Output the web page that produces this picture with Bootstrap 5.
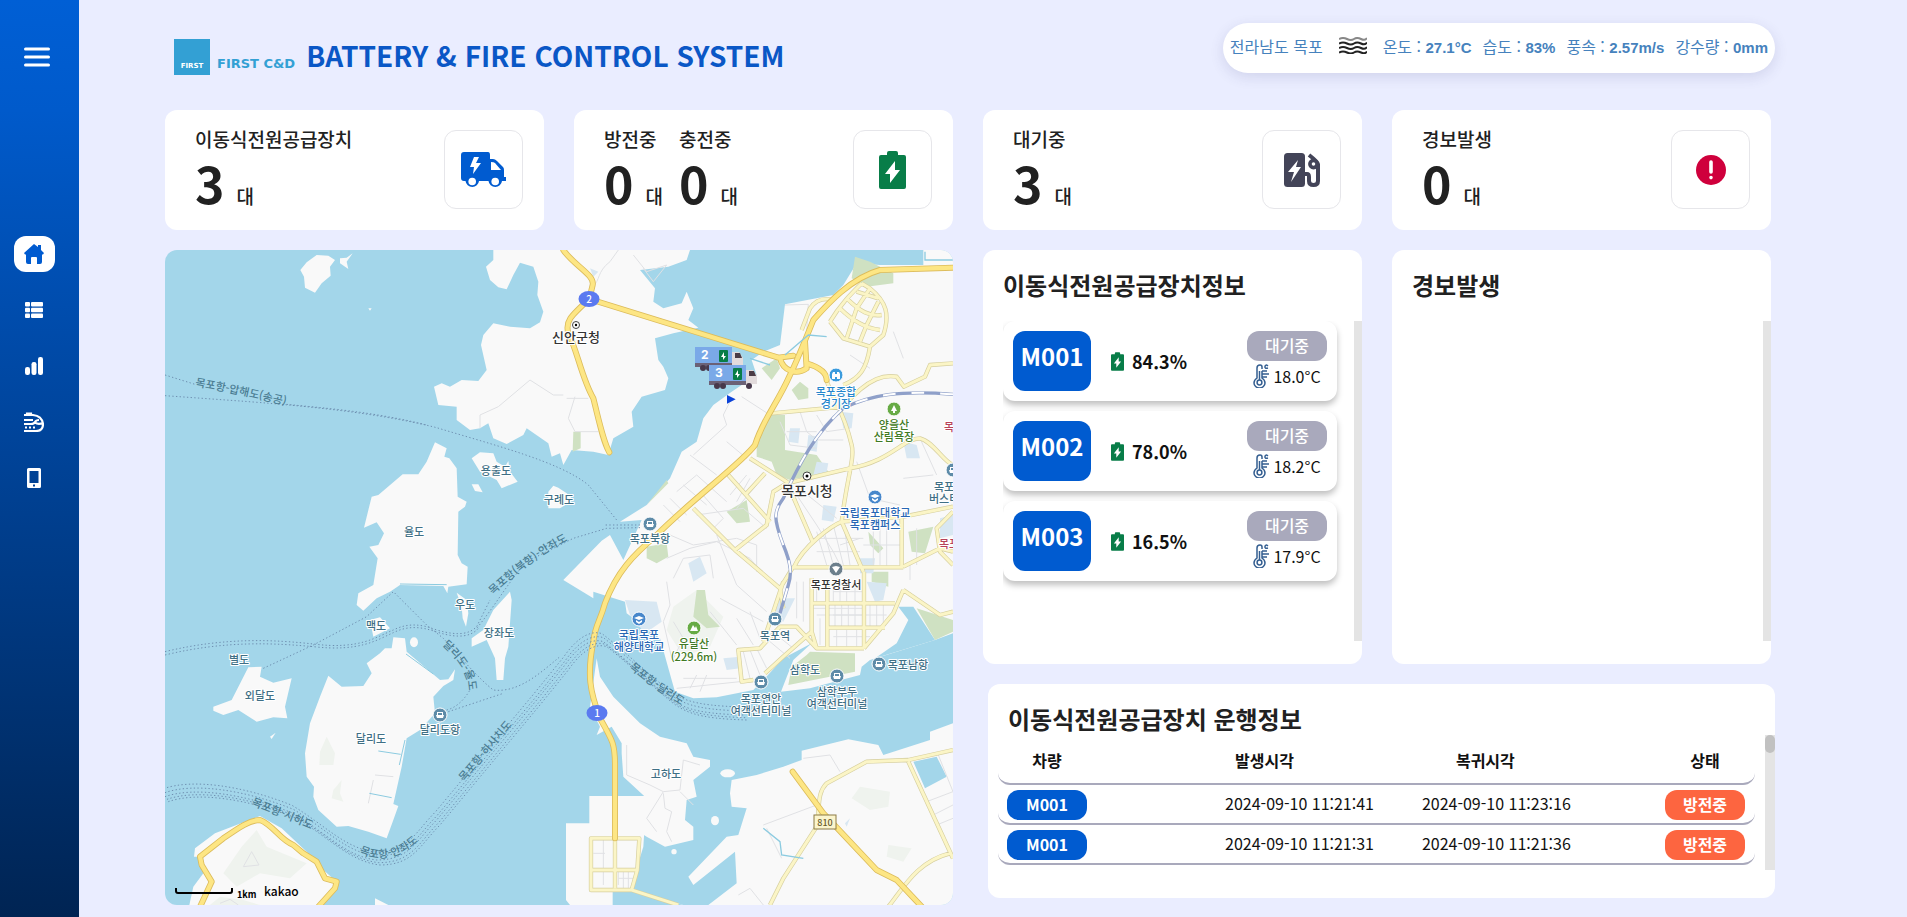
<!DOCTYPE html>
<html lang="ko">
<head>
<meta charset="utf-8">
<meta name="viewport" content="width=device-width, initial-scale=1">
<title>BATTERY &amp; FIRE CONTROL SYSTEM</title>
<link href="https://cdn.jsdelivr.net/npm/bootstrap@5.3.0/dist/css/bootstrap.min.css" rel="stylesheet">
<style>
:root{--brand:#005bd0;--ink:#212121}
body{background:#eaedff;color:var(--ink);font-family:"Noto Sans CJK KR","Noto Sans",sans-serif;font-size:16px;min-height:100vh}
.side{width:79px;flex:none;background:linear-gradient(180deg,#005fd5 0%,#005acb 12%,#002453 100%);padding-top:40px}
.side .menu-btn{width:34px;height:34px;margin-left:20px;color:#fff}
.side .menu-list{margin-top:162px;gap:20px;padding-left:14px}
.side a{width:41px;height:36px;border-radius:12px;color:#fff;padding-right:1px}
.side a.active{background:#fff;color:var(--brand)}
.main-area{padding:23px 121px 12px 71px;min-width:0}
.page-grid{padding:0 15px}
.gutter{--bs-gutter-x:30px;--bs-gutter-y:20px}
.top-bar{height:87px;padding-left:24px;margin-right:11px}
.logo-box{width:36px;height:36px;background:#33a0d4;color:#fff;font:700 7px "DejaVu Sans",sans-serif;padding-bottom:5px;margin-top:16px}
.logo-name{font:700 13px "DejaVu Sans",sans-serif;color:#33a0d4;margin:33px 11px 0 7px}
.site-title{font-size:28px;line-height:36px;font-weight:700;color:#0a57c6;margin-top:14px}
.weather{height:50px;border-radius:25px;background:#fff;box-shadow:0 4px 14px rgba(60,60,120,.14);color:#4682bd;line-height:46px;padding:0 7px}
.weather b{font:700 15px/46px "Liberation Sans",sans-serif}
.weather .sky-icon{margin:14px 16px 0}
.weather .readings{gap:11px}
.box{background:#fff;border-radius:12px}
.stat{height:120px;padding:15px 21px 0 30px}
.stat h2{font-size:19px;line-height:28px;font-weight:500;margin:0}
.stat .num{font-size:50px;line-height:56px;font-weight:700;margin-top:1px}
.stat .num small{font-size:19px;font-weight:500;margin-left:12px}
.icon-frame{width:79px;height:79px;border:1px solid #e6e6ea;border-radius:12px;margin-top:5px}
.map-box{height:calc(100vh - 262px);min-height:655px;border-radius:12px;overflow:hidden;background:#a3d6ea}
.map-box svg{width:100%;height:100%}
.panel{height:414px;padding:19px 0 23px 20px}
.panel-title{font-size:24px;line-height:31px;font-weight:700;margin:0}
.scroller{height:320px;overflow:hidden;margin-top:21px}
.track{width:8px;background:#e4e4e4;flex:none}
.unit-list{gap:10px}
.unit{height:80px;border-radius:12px;background:#fff;box-shadow:0 4px 6px rgba(0,0,0,.25);padding:10px;margin-right:17px}
.unit-id{width:78px;height:60px;border-radius:12px;background:var(--brand);color:#fff;font-size:24px;line-height:50px;font-weight:700}
.charge{font-size:18px;line-height:26px;font-weight:700;color:#111;margin-left:20px}
.pill{display:inline-block;width:80px;height:30px;line-height:28px;border-radius:12px;color:#fff;text-align:center;font-weight:500}
.pill-wait{background:#a9a9bc}.pill-id{background:var(--brand)}.pill-out{background:#fd6540}
.temp{height:30px;color:#111}
.trips{margin:0 -4px 0 5px;height:214px;padding:19px 0 0 10px}
.trips .panel-title{padding-left:10px}
.trips .scroller{height:135px;margin-top:1px}
.trips .track{width:10px;margin-left:10px}
.thumb{height:18px;border-radius:6px;background:#c1c1c1}
.trip-table{width:100%;border-collapse:separate;border-spacing:0;table-layout:fixed;color:#111}
.trip-table th{height:50px;font-weight:700;line-height:24px;padding:2px 0 0;border-bottom:2px solid #a9a9bc}
.trip-table td{height:40px;padding:5px 0 0;line-height:26px;vertical-align:top;border-bottom:2px solid #a9a9bc}
.trip-table tr>:first-child{padding-left:9px;border-bottom-left-radius:12px}
.trip-table tr>:last-child{padding-right:10px;border-bottom-right-radius:12px}
.trip-table .pill{font-weight:700;vertical-align:top;line-height:29px}
.trip-table th span{width:80px;display:inline-block;text-align:center}
.trip-table th.out-head{padding-left:10px}
.trip-table th.back-head{padding-left:34px}
.c1{width:30%}.c2{width:26%}.c3{width:24%}
.land{fill:#f9f9f9}
.maj-c{fill:none;stroke:#dcbc5c;stroke-width:18;stroke-linejoin:round;stroke-linecap:round}
.maj{fill:none;stroke:#fde684;stroke-width:13;stroke-linejoin:round;stroke-linecap:round}
.sec-c{fill:none;stroke:#d6cf9f;stroke-width:13;stroke-linejoin:round}
.sec-f{fill:none;stroke:#fbf5c6;stroke-width:9;stroke-linejoin:round}
.minor{fill:none;stroke:#e0e1e4;stroke-width:3}
.green{fill:#cfe1c2}.dim{fill:#eff3ee}.patch{fill:#d8e7f2}
.ferry{fill:none;stroke:#6d8fb0;stroke-width:3;stroke-dasharray:4 7}
.lab{font-size:11px;font-weight:500;text-anchor:middle;paint-order:stroke;stroke:#fff;stroke-width:2px;stroke-linejoin:round;fill:#3f6f85}
.lab .dark{fill:#333}.lab .grn{fill:#3f7a24}.lab .blu{fill:#2766b4}.lab .sky{fill:#2586cc}.lab .red{fill:#b8435a}
.lab .route{stroke:none;fill:#4a7c92}
</style>
<script src="https://cdn.jsdelivr.net/npm/bootstrap@5.3.0/dist/js/bootstrap.bundle.min.js"></script>
</head>
<body class="d-flex">
<svg width="0" height="0" class="position-absolute" aria-hidden="true">
  <symbol id="battery" viewBox="0 0 27 38"><path fill="#087d48" d="M2 4H8V2Q8 0 10 0H17Q19 0 19 2V4H25Q27 4 27 6V36Q27 38 25 38H2Q0 38 0 36V6Q0 4 2 4Z"/><path fill="#fff" d="M16 10V19H21L11 32V23H6Z"/></symbol>
  <symbol id="thermo" viewBox="0 0 16 24"><g fill="none" stroke="#355f91" stroke-width="1.5"><path d="M9 5V3Q9 1 7 1Q4 1 4 4V14Q1 16 1 19A5 4.500 0 0 0 12 19Q12 16 9 14V7"/><circle cx="6.500" cy="18.500" r="2.400"/><path d="M6.500 7V16M9 7H14M9 10H16M9 13H14M15 2Q12.500 0 12 2.500T15 4"/></g></symbol>
</svg>

<aside class="side">
  <button type="button" class="menu-btn btn p-0 border-0 d-flex align-items-center justify-content-center" aria-label="메뉴">
    <svg width="26" height="20" viewBox="0 0 26 20"><path d="M1.500 2H24.500M1.500 10H24.500M1.500 18H24.500" stroke="#fff" stroke-width="3" stroke-linecap="round"/></svg>
  </button>
  <nav class="menu-list d-flex flex-column">
    <a href="#" class="active d-flex align-items-center justify-content-center" aria-label="홈"><svg width="20" height="20" viewBox="0 0 20 20" fill="currentColor"><path d="M10 0L14 3V1H17V6L20 9L19 10.500H18V18Q18 20 16 20H13V14Q13 13 12 13H8Q7 13 7 14V20H4Q2 20 2 18V10.500H1L0 9Z"/></svg></a>
    <a href="#" class="d-flex align-items-center justify-content-center" aria-label="목록"><svg width="18" height="16" viewBox="0 0 18 16" fill="currentColor"><rect width="5" height="4.600" rx="1"/><rect x="6" width="12" height="4.600" rx="1"/><rect y="5.700" width="5" height="4.600" rx="1"/><rect x="6" y="5.700" width="12" height="4.600" rx="1"/><rect y="11.400" width="5" height="4.600" rx="1"/><rect x="6" y="11.400" width="12" height="4.600" rx="1"/></svg></a>
    <a href="#" class="d-flex align-items-center justify-content-center" aria-label="통계"><svg width="18" height="18" viewBox="0 0 18 18" fill="currentColor"><rect y="10" width="5" height="8" rx="2.200"/><rect x="6.500" y="5" width="5" height="13" rx="2.200"/><rect x="13" width="5" height="18" rx="2.200"/></svg></a>
    <a href="#" class="d-flex align-items-center justify-content-center" aria-label="운행"><svg width="20" height="20" viewBox="0 0 20 20" fill="none" stroke="currentColor" stroke-width="2.200"><path d="M0 3H9Q18 4 19 12Q19 19 12 19H0M3 3V1.500H7V3M0 8H9M0 12H7Q10 12 11 10Q12 8 15 8M11 10.500Q14 13 19 11"/><path d="M1 15.500H12" stroke-dasharray="2 2"/></svg></a>
    <a href="#" class="d-flex align-items-center justify-content-center" aria-label="모바일"><svg width="14" height="20" viewBox="0 0 14 20"><path fill="currentColor" fill-rule="evenodd" d="M1.500 0H12.500Q14 0 14 1.500V18.500Q14 20 12.500 20H1.500Q0 20 0 18.500V1.500Q0 0 1.500 0ZM2.500 3V15H11.500V3ZM6 16.500V18.500H8V16.500Z"/></svg></a>
  </nav>
</aside>

<main class="main-area flex-grow-1">
  <header class="top-bar d-flex align-items-start">
    <div class="d-flex flex-grow-1">
      <div class="logo-box d-flex align-items-end justify-content-center">FIRST</div>
      <div class="logo-name text-nowrap">FIRST C&amp;D</div>
      <h1 class="site-title mb-0 text-nowrap">BATTERY &amp; FIRE CONTROL SYSTEM</h1>
    </div>
    <div class="weather d-flex text-nowrap">
      <span>전라남도 목포</span>
      <svg class="sky-icon" width="28" height="17" viewBox="0 0 28 17" fill="none" stroke="#222" stroke-width="2"><path stroke="#888" d="M0 2Q4 0 8 2T15 2T22 2T28 1"/><path d="M0 6.500Q4 4.500 8 6.500T15 6.500T22 6.500T28 5.500M0 11Q4 9 8 11T15 11T22 11T28 10M0 15.500Q4 13.500 8 15.500T15 15.500T22 15.500T28 14.500"/></svg>
      <div class="readings d-flex"><span>온도 : <b>27.1°C</b></span> <span>습도 : <b>83%</b></span> <span>풍속 : <b>2.57m/s</b></span> <span>강수량 : <b>0mm</b></span></div>
    </div>
  </header>

  <div class="page-grid">
  <div class="row gutter">
    <div class="col-3"><section class="box stat d-flex justify-content-between">
      <div><h2>이동식전원공급장치</h2><div class="num">3<small>대</small></div></div>
      <div class="icon-frame d-flex align-items-center justify-content-center"><svg width="45" height="36" viewBox="0 0 45 36"><path fill="#005bd0" fill-rule="evenodd" d="M3 0H27Q29 0 29 3V7H32Q34 7 36 9L42 15Q43 16 43 18V25H45V29H41A6.800 6.800 0 0 1 27.500 29H18A6.800 6.800 0 0 1 4.500 29H3Q0 29 0 26V3Q0 0 3 0ZM30 10V18H40L34 11Q33 10 30 10ZM13 5L9 15H13L12 22L20 11H15L18 5Z"/><g fill="#fff"><circle cx="11.200" cy="29.500" r="3.800"/><circle cx="34.200" cy="29.500" r="3.800"/></g></svg></div>
    </section></div>
    <div class="col-3"><section class="box stat d-flex justify-content-between">
      <div class="d-flex gap-3"><div><h2>방전중</h2><div class="num">0<small>대</small></div></div><div><h2>충전중</h2><div class="num">0<small>대</small></div></div></div>
      <div class="icon-frame d-flex align-items-center justify-content-center"><svg width="27" height="38"><use href="#battery"/></svg></div>
    </section></div>
    <div class="col-3"><section class="box stat d-flex justify-content-between">
      <div><h2>대기중</h2><div class="num">3<small>대</small></div></div>
      <div class="icon-frame d-flex align-items-center justify-content-center"><svg width="36" height="34" viewBox="0 0 36 34"><rect width="21" height="34" rx="3.500" fill="#434458"/><path fill="#fff" d="M14 7L4 19H10L7 29L17 14H12Z"/><path d="M21 21H23Q25 21 25 24V28Q25 32 29.500 32T34 28V11Q34 9 25 2" fill="none" stroke="#434458" stroke-width="4"/><circle cx="29.500" cy="11" r="3.600" fill="#fff" stroke="#434458" stroke-width="3.600"/></svg></div>
    </section></div>
    <div class="col-3"><section class="box stat d-flex justify-content-between">
      <div><h2>경보발생</h2><div class="num">0<small>대</small></div></div>
      <div class="icon-frame d-flex align-items-center justify-content-center"><svg width="30" height="30" viewBox="0 0 30 30"><circle cx="15" cy="15" r="15" fill="#cf003c"/><path d="M15 7V17M15 22.500V22.600" stroke="#fff" stroke-width="3.600" stroke-linecap="round"/></svg></div>
    </section></div>

    <div class="col-6"><div class="map-box">
    <svg viewBox="0 0 788 655" preserveAspectRatio="xMinYMin slice" role="img" aria-label="지도">
      <defs>
        <path id="r-a" d="M30 136Q80 145 140 160"/><path id="r-b" d="M328 345Q365 310 402 291"/><path id="r-c" d="M277 395Q310 425 302 450"/>
        <path id="r-d" d="M299 532L354 467"/><path id="r-e" d="M86 555Q125 570 155 583"/><path id="r-f" d="M194 603Q230 620 264 580"/><path id="r-g" d="M464 418Q490 440 524 460"/>
        <g id="ship"><circle r="7" fill="#5d8ba8" stroke="#fff"/><path d="M-3 -3H3V0H4L3 3H-3L-4 0H-3ZM-2 -2V0H2V-2Z" fill="#fff" fill-rule="evenodd"/></g>
        <g id="truck"><rect width="37" height="17" fill="#7aa9e8"/><path d="M37 5H44L48 11V19H37Z" fill="#e2dbdc"/><path d="M40 6H45L47 11H40Z" fill="#4a3b45"/><path d="M0 16H37V20H0Z" fill="#6b6176"/><g fill="#47384a"><circle cx="8" cy="21" r="3"/><circle cx="14" cy="21" r="3"/><circle cx="40" cy="21" r="3"/></g><rect x="24" y="3" width="9" height="12" rx="1" fill="#087d48"/><path d="M29 5V9H31L28 13V10H26Z" fill="#fff"/></g>
      </defs>
      <g transform="scale(.33333)">
        <g class="land">
          <path d="M985 0L985 30 963 50 975 90 1000 112 1025 118 1045 75 1065 38 1105 50 1120 95 1117 135 1135 185 1125 217 1095 235 1035 230 985 220 955 255 948 285 965 360 940 393 890 390 855 410 830 400 807 410 820 465 875 470 875 510 915 540 945 535 970 520 985 565 1025 582 1075 555 1085 535 1150 580 1160 620 1185 610 1195 645 1220 600 1285 605 1330 615 1345 565 1405 530 1400 485 1430 440 1500 420 1510 385 1495 350 1480 330 1470 265 1525 250 1600 233 1570 210 1585 175 1565 125 1550 160 1495 175 1465 155 1470 115 1425 60 1510 50 1565 30 1575 0Z"/>
          <path d="M2275 0L2275 45 2145 45 2075 40 2035 105 2005 135 1860 163 1845 285 1795 305 1760 330 1775 375 1700 425 1645 465 1615 505 1595 575 1550 605 1515 685 1445 765 1365 815 1430 810 1375 930 1335 855 1310 872 1195 990 1285 1045 1285 1025 1380 1055 1385 1090 1485 1165 1520 1290 1530 1325 1585 1345 1655 1342 1765 1320 1800 1285 1855 1225 1940 1180 1885 1230 1848 1325 1935 1315 2085 1275 2090 1250 2115 1230 2310 1170 2364 1150 2364 0Z"/>
          <g transform="translate(-15 -15)">
            <path d="M470 30L505 32 525 45 510 65 512 92 485 115 465 143 435 128 432 95 421 75 440 52ZM540 40L560 38 578 25 560 50 565 72 540 55ZM625 190L635 190 630 197Z"/>
            <path d="M825 592L860 610 853 635 868 640 890 670 893 755 920 770 915 785 895 800 893 930 905 955 923 965 920 1018 865 1025 862 1045 850 1023 720 1020 690 1040 650 1060 610 1097 590 1080 595 1045 640 1020 653 940 628 905 655 900 672 865 650 832 612 848 635 755 655 750 728 688 775 688 800 650Z"/>
            <path d="M935 640L960 622 1000 625 1010 650 1035 665 1045 648 1050 680 1073 710 1025 730 1010 705 960 680ZM935 718L955 718 968 742 945 738ZM1165 740L1180 722 1195 728 1220 745 1240 765 1200 790 1165 790Z"/>
          </g>
          <g transform="translate(-15 990)">
            <path d="M890 38L920 60 925 100 918 140 908 115 905 80ZM1050 35L1055 60 1045 200 1035 235 1030 300 1010 300 1005 235 980 180 935 200 935 175 970 150 1000 90ZM630 120L660 112 690 145 640 170ZM265 262L305 260 300 290 340 308 395 295 375 380 382 415 340 412 290 425 235 390 190 405 160 392 160 380 215 360ZM330 470L347 458 335 477Z"/>
            <path d="M505 287L545 320 610 318 635 280 620 250 660 220 675 205 695 205 700 172 735 175 740 215 840 300 865 298 885 268 880 300 850 318 820 350 825 400 780 450 740 475 725 560 700 672 715 678 700 720 680 775 625 755 565 738 530 740 475 690 460 650 462 620 440 590 435 520 450 430 480 350ZM88 975L100 920 130 880 125 830 102 830 105 805 165 760 300 708 365 745 440 815 490 870 535 910 480 975ZM645 955L685 975 645 975Z"/><ellipse cx="762" cy="187" rx="12" ry="15"/>
          </g>
          <g transform="translate(1155 990)">
            <path d="M140 235L150 290 190 350 270 430 330 470 410 490 430 530 480 540 480 560 430 600 440 650 410 660 405 720 430 740 430 780 345 800 290 770 260 750 285 650 220 590 215 520 215 490 185 440 140 465 150 440 120 380ZM118 648H290L280 800 240 930 400 975 188 975V940L188 975H60L48 960V730H118ZM545 600L620 585 700 560 755 540 755 512 895 478 985 495 1000 525 1140 480 1140 455 1209 430V975H475L560 910 555 815 430 915 415 890 530 770 565 765 590 685 545 680 540 640Z"/><ellipse cx="533" cy="580" rx="22" ry="12"/><ellipse cx="495" cy="722" rx="12" ry="14"/><circle cx="372" cy="815" r="8"/>
          </g>
        </g>
        <path fill="#a3d6ea" d="M1343 1920L1400 1922 1555 1965H1343ZM2245 1535L2315 1520 2345 1580 2280 1615ZM2200 1070L2245 1070 2310 1170 2130 1225 2195 1180 2230 1110Z"/>
        <g class="dim" transform="translate(-15 990)"><path d="M500 470L525 520 520 555 478 555 480 515ZM545 600L540 640 550 665 515 655 520 630ZM290 750L320 800 440 850 390 895 300 880 230 920 190 880 245 800ZM180 950L250 960 300 975H150Z"/></g>
        <g class="dim" transform="translate(1155 990)"><path d="M930 620L1020 635 1015 680 960 690 905 655ZM1015 795L1085 805 1060 845 1010 830ZM370 80L440 30 520 110 480 200 400 230 350 150Z"/></g>
        <g transform="translate(1155 -15)">
          <path class="green" d="M915 35L960 50 1030 85 1030 115 950 125 905 100ZM635 370L680 340 690 370 665 405ZM725 435L750 410 775 430 775 460 745 465ZM650 510L705 510 705 615 800 630 835 680 720 705 680 690 665 650 620 635 620 600ZM530 800L590 765 600 830 560 835ZM290 905L350 895 355 935 320 955 290 940ZM70 560L92 560 92 610 68 620ZM1075 860L1150 845 1125 925 1085 920ZM955 860L1000 910 985 925 960 900ZM290 780L355 715 350 705ZM965 980L1015 980 1015 1025 965 1010Z"/>
          <path class="green" d="M440 1035L465 1035 475 1110 510 1145 470 1150 430 1115ZM780 1220L915 1225 915 1280 715 1320 725 1265 770 1230ZM1060 1065L1100 1090 1209 1125V1160L1155 1185 1100 1090Z"/>
          <path class="patch" d="M720 550L750 550 745 595 715 590ZM775 570L805 575 800 620 770 615ZM415 955L450 935 470 985 430 1010ZM870 500L910 505 905 550 880 550ZM800 650L835 655 830 680 790 690ZM930 940L975 940 970 985 930 985ZM1060 590L1100 600 1110 640 1070 640ZM225 1065L320 1070 335 1130 285 1165 240 1110ZM120 70L145 80 130 95ZM950 1010L1010 1015 1000 1065 975 1070ZM520 1240L570 1235 570 1270 530 1275ZM690 1060L735 1060 700 1130 670 1115ZM900 1720L890 1745 885 1735ZM820 780L860 785 850 830 815 825ZM1170 820L1209 810V870L1170 880Z"/>
          <g class="minor">
            <path d="M205 15L180 50C140 80 150 110 130 120M250 30L290 80 350 60 310 110 280 70M705 180L775 178 770 260M50 460H115M75 455L55 520 75 560H145M540 470L520 510 530 540 430 630M575 455L660 510M530 590L590 640M420 630L500 690M400 720L470 780M380 740L440 690 530 770M360 760L410 810M340 780L390 830M450 740L520 820 490 850M440 810L580 790 650 850M590 690L540 750M600 700L560 770M620 720L560 790M350 940L420 910 500 890 600 940 650 1000M360 870L430 900 560 880 620 900 620 980M370 1000L400 940 480 930 490 1000M500 870L560 1020 650 1100"/>
            <path d="M690 530L720 600 800 610M750 500L770 560 800 585H880M800 510L830 560 900 550M710 560H800M740 750L800 840 850 920 870 960M760 740L860 820M780 880H940M800 860L830 960M820 850L850 960M850 840L880 960M870 900L930 880M800 920H930M880 830L900 960M970 860V960M990 850V960M1010 850V970M940 900H1060M1060 700L1150 690M1100 850V960M1110 580L1160 690M1080 1005V960M900 330L960 370M920 650L960 760 1050 780M1030 260L1060 340"/>
            <path d="M790 1090H940M800 1110H940M810 1120V1200M855 1075V1145M875 1075V1145M895 1075V1145M915 1075V1145M960 1075V1145M980 1075V1145M1000 1075V1145M860 1155V1205M890 1155V1205M920 1155V1205M850 1110H1010M850 1175H960M800 1010V1070M850 1010V1070M870 1010V1070M890 1010V1070M915 1010V1070M850 1040H940M740 1010L740 1120M760 1010V1130M600 1100L630 1180M560 1120L610 1200M480 1100L560 1200M510 1060L640 1130M580 1220L600 1300M600 1215L630 1290M620 1210L650 1270M660 1190L720 1240M680 1170L730 1210M400 1300H560M420 1330L440 1290M450 1340L470 1290M370 1240L400 1180 370 1130M350 1010L360 1080 340 1130 365 1240M380 1330L570 1310"/>
            <path d="M230 1500L230 1590 300 1620 340 1640 390 1635 400 1545 450 1560M390 1640L430 1680M340 1645L345 1690 365 1700 350 1760 365 1790M340 1640L290 1720 320 1760M640 1740L800 1680M760 1540L840 1530 870 1580M695 1840L650 1750M1130 1670L1209 1640M1150 1710L1209 1680M1160 1740L1209 1720M160 1785V1920M130 1825H165M205 1870V1920M220 1880V1930M235 1880V1930M205 1900H250M565 1950L600 1930 640 1980M1165 1530L1209 1640"/>
          </g>
          <defs><path id="sec-roads" d="M665 505L880 485C960 390 1010 390 1040 395L1062 425 1125 395 1140 360 1209 355M830 405C840 450 880 490 905 600C915 640 890 700 875 830M710 715L900 670C1020 650 1060 580 1110 580C1150 590 1180 650 1209 660M600 640L710 710 790 895M535 690L660 830M590 745L645 685M430 790L555 915 690 1030M555 915L650 840 670 740 710 715M875 830L1060 815 1209 785M730 970C760 900 850 840 875 830L940 980M730 967H1060M1060 965L1170 910 1209 920M1055 820V970M1209 800L1160 850 1170 920 1209 960M730 965L690 1030 700 1090M840 230C870 180 900 150 935 115M840 230L880 280 960 305 1000 270C1020 210 1010 170 960 130L935 115M870 190C910 230 950 250 990 255M890 160C930 200 960 215 995 210M920 140L985 160M960 130L920 190 890 280M985 170L950 240 930 290M755 255L780 190C800 160 830 160 850 165M960 305C950 370 930 400 880 420M785 1000V1160M832 1005V1210M942 980V1210M785 1075H1035M832 1148H1005M800 1210H942M1060 1035L1030 1105 942 1210M1060 1035L1170 1110 1209 1100M645 1285L700 1235 785 1160 800 1210 740 1145 690 1145 630 1210 565 1215 575 1310 610 1305M700 1010L640 1190M1209 1515L1075 1545 950 1550 830 1615C800 1645 810 1685 800 1745L700 1900 660 1980M1075 1550L1209 1840M1200 1825C1100 1850 1060 1930 1015 1985M123 1780H268L262 1875 245 1935H123ZM195 1780V1930M123 1875H262M245 1935L385 1980"/>
          <path id="maj-roads" d="M40 15C70 60 135 90 128 120L118 162C60 215 45 230 55 265C80 310 95 400 130 460C150 540 160 590 178 622M118 162L685 338 730 332M690 340C700 380 740 390 770 370L765 290M770 355C820 370 830 390 830 405M1209 68L990 75C900 100 830 180 790 225C760 300 740 350 720 390C680 480 640 520 615 600C580 650 430 760 320 870C250 930 200 980 165 1075C150 1130 135 1140 130 1190C110 1290 120 1340 150 1420C190 1490 195 1500 195 1560V1780M728 1580L820 1705 980 1875 1040 1905 1120 1990"/>
          <path id="rail" d="M1209 448C1050 435 960 450 880 490C800 560 750 650 700 760C670 800 670 820 700 900C725 960 725 990 715 1020L690 1105"/></defs>
          <use href="#sec-roads" class="sec-c"/><use href="#sec-roads" class="sec-f"/>
          <use href="#rail" fill="none" stroke="#8fa0c9" stroke-width="10"/>
          <use href="#rail" fill="none" stroke="#fff" stroke-width="6" stroke-dasharray="38 48"/>
          <use href="#maj-roads" class="maj-c"/><use href="#maj-roads" class="maj"/>
          <g fill="none" stroke="#8ccbe0" stroke-width="4"><path d="M640 1750L690 1790 695 1830 760 1840M705 330L775 270 830 275M1125 20V45H1209M600 340L660 360"/></g>
        </g>
        <g transform="translate(-15 990)">
          <defs><path id="sw-road" d="M118 985L155 905 125 855 120 830 190 775C240 740 270 720 300 720C340 735 360 780 400 795L430 820 470 845 495 895 530 905 525 925 475 980"/></defs>
          <use href="#sw-road" class="maj-c"/><use href="#sw-road" class="maj"/>
          <path class="minor" d="M275 815L297 855 250 860ZM180 970L210 958 235 975M960 -455V-495L1015 -520 1110 -600 1180 -555 1210 -555M645 585L700 590M640 600L625 670"/>
          <path d="M655 513L722 523M735 480L718 555M628 640L695 653M738 222L820 282M720 12L860 14" fill="none" stroke="#8ccbe0" stroke-width="3"/>
        </g>
        <g class="ferry">
          <g transform="translate(-15 -15)"><path d="M15 390L105 418M15 452L240 468C400 480 640 500 830 548C1000 600 1200 650 1285 720L1370 825M380 478C500 490 640 500 800 540M1440 840L1330 840M1440 848L1340 850 1240 880 1100 950C1060 990 1000 1090 950 1150"/></g>
          <g transform="translate(-15 990)"><path d="M15 215C200 170 350 180 460 192C600 210 650 170 700 150C740 130 780 130 830 150C900 170 930 160 950 140L990 60M15 225C200 180 350 190 460 200C600 216 650 180 700 158C740 138 780 138 830 156C900 178 935 168 955 145M310 265L460 195 620 110 700 35 800 135 850 175C900 230 960 300 1000 330C1080 340 1150 270 1200 230M865 395L1030 340M860 390Q900 380 930 330"/>
          <path id="lane" d="M15 650C100 620 250 640 400 700C500 760 560 830 650 840C750 840 770 780 830 720L1130 360 1215 255C1260 190 1300 175 1330 185C1370 215 1430 270 1500 330C1560 385 1600 400 1750 405"/>
          <use href="#lane" y="-12"/><use href="#lane" x="-4" y="-24"/><use href="#lane" x="6" y="8"/><use href="#lane" x="10" y="15"/></g>
        </g>
        <path d="M1686 435L1712 448 1686 461Z" fill="#0b42d8"/>
      </g>
      <ellipse cx="424" cy="49" rx="10.500" ry="8" fill="#5b7af0"/><ellipse cx="432" cy="463" rx="10.500" ry="8" fill="#5b7af0"/>
      <rect x="649" y="565" width="22" height="14" fill="#fbf5cd" stroke="#8c7b45"/>
      <g font-size="10" text-anchor="middle" font-weight="500"><text x="424" y="53" fill="#fff">2</text><text x="432" y="467" fill="#fff">1</text><text x="660" y="576" font-size="9" fill="#6b5c2b">810</text></g>
      <g fill="#fff" stroke="#444"><circle cx="411" cy="75" r="3.500"/><circle cx="642" cy="226" r="4"/></g><circle cx="411" cy="75" r="1.200"/><circle cx="642" cy="226" r="1.500"/>
      <use href="#ship" x="485" y="274"/><use href="#ship" x="275" y="465"/><use href="#ship" x="596" y="432"/><use href="#ship" x="672" y="426"/><use href="#ship" x="714" y="414"/><use href="#ship" x="610" y="369"/><use href="#ship" x="788" y="220"/>
      <g stroke="#fff"><circle cx="671" cy="125" r="7" fill="#3b9bdd"/><circle cx="729" cy="159" r="7" fill="#67ab45"/><circle cx="529" cy="378" r="7" fill="#67ab45"/><circle cx="710" cy="247" r="7" fill="#4787cb"/><circle cx="474" cy="369" r="7" fill="#4787cb"/><circle cx="671" cy="319" r="7" fill="#6c7f8c"/></g>
      <g fill="#fff"><path d="M667 124L668 122H670V124H672V122H674L675 124V129H672V127H670V129H667ZM729 155L732 161H730V163H728V161H726ZM525 381L528 375 530 378 531 376 533 381ZM710 244L715 246 710 248 705 246ZM707 248L710 250 713 248V250L710 252 707 250ZM474 366L479 368 474 370 469 368ZM471 370L474 372 477 370V372L474 374 471 372ZM667 317L671 316 675 317 673 320 671 323 669 320Z"/></g>
      <g class="lab">
        <text class="dark" x="411" y="92" font-size="13">신안군청</text><text class="dark" x="642" y="246" font-size="14">목포시청</text>
        <text x="331" y="225">용출도</text><text x="394" y="254">구례도</text><text x="249" y="286">율도</text><text x="300" y="359">우도</text><text x="211" y="380">맥도</text><text x="334" y="387">장좌도</text><text x="74" y="414">별도</text><text x="95" y="450">외달도</text><text x="206" y="493">달리도</text><text x="275" y="484">달리도항</text><text x="501" y="528">고하도</text>
        <text x="485" y="293">목포북항</text><text x="610" y="390">목포역</text><text x="640" y="424">삼학도</text><text x="743" y="419">목포남항</text><text x="596" y="453">목포연안</text><text x="596" y="465">여객선터미널</text><text x="672" y="446">삼학부두</text><text x="672" y="458">여객선터미널</text>
        <text class="sky" x="671" y="146">목포종합</text><text class="sky" x="671" y="158">경기장</text><text class="grn" x="729" y="179">양을산</text><text class="grn" x="729" y="191">산림욕장</text><text class="grn" x="529" y="398">유달산</text><text class="grn" x="529" y="411">(229.6m)</text>
        <text class="blu" x="710" y="267">국립목포대학교</text><text class="blu" x="710" y="279">목포캠퍼스</text><text class="blu" x="474" y="389">국립목포</text><text class="blu" x="474" y="401">해양대학교</text><text class="dark" x="671" y="339">목포경찰서</text>
        <g text-anchor="start"><text class="red" x="779" y="181">목</text><text class="red" x="774" y="298">목포</text><text x="769" y="241">목포</text><text x="764" y="253">버스터</text></g>
        <g class="route" text-anchor="start">
          <text><textPath href="#r-a">목포항-압해도(송공)</textPath></text><text><textPath href="#r-b">목포항(북항)-안좌도</textPath></text><text><textPath href="#r-c">달리도-율도</textPath></text><text><textPath href="#r-d">목포항-하사치도</textPath></text><text><textPath href="#r-e">목포항-시하도</textPath></text><text><textPath href="#r-f">목포항-안좌도</textPath></text><text><textPath href="#r-g">목포항-달리도</textPath></text>
        </g>
      </g>
      <use href="#truck" x="530" y="97"/><use href="#truck" x="544" y="115"/>
      <g fill="#fff" font-family="Inter, sans-serif" font-weight="700" font-size="12"><text x="536" y="109">2</text><text x="550" y="127">3</text></g>
      <path d="M11 638V641Q11 643 13 643H65Q67 643 67 641V638" fill="none" stroke="#000" stroke-width="2"/>
      <text x="72" y="648" font-size="9" font-weight="700">1km</text><text x="99" y="646" font-size="12" font-weight="500">kakao</text>
    </svg>
    </div></div>

    <div class="col-6">
      <div class="row gutter">
        <div class="col-6"><section class="box panel">
          <h2 class="panel-title">이동식전원공급장치정보</h2>
          <div class="scroller d-flex">
            <div class="unit-list d-flex flex-column flex-grow-1">
              <div class="unit d-flex"><div class="unit-id text-center">M001</div><div class="charge d-flex align-items-center gap-2"><svg width="13" height="19"><use href="#battery"/></svg>84.3%</div><div class="ms-auto"><span class="pill pill-wait">대기중</span><div class="temp d-flex align-items-center justify-content-center gap-1"><svg width="16" height="24"><use href="#thermo"/></svg>18.0°C</div></div></div>
              <div class="unit d-flex"><div class="unit-id text-center">M002</div><div class="charge d-flex align-items-center gap-2"><svg width="13" height="19"><use href="#battery"/></svg>78.0%</div><div class="ms-auto"><span class="pill pill-wait">대기중</span><div class="temp d-flex align-items-center justify-content-center gap-1"><svg width="16" height="24"><use href="#thermo"/></svg>18.2°C</div></div></div>
              <div class="unit d-flex"><div class="unit-id text-center">M003</div><div class="charge d-flex align-items-center gap-2"><svg width="13" height="19"><use href="#battery"/></svg>16.5%</div><div class="ms-auto"><span class="pill pill-wait">대기중</span><div class="temp d-flex align-items-center justify-content-center gap-1"><svg width="16" height="24"><use href="#thermo"/></svg>17.9°C</div></div></div>
            </div>
            <div class="track"></div>
          </div>
        </section></div>
        <div class="col-6"><section class="box panel">
          <h2 class="panel-title">경보발생</h2>
          <div class="scroller d-flex justify-content-end"><div class="track"></div></div>
        </section></div>
        <div class="col-12"><section class="box trips">
          <h2 class="panel-title">이동식전원공급장치 운행정보</h2>
          <div class="scroller d-flex">
            <div class="flex-grow-1"><table class="trip-table">
              <colgroup><col class="c1"><col class="c2"><col class="c3"><col></colgroup>
              <thead><tr><th><span>차량</span></th><th class="out-head">발생시각</th><th class="back-head">복귀시각</th><th class="text-end"><span>상태</span></th></tr></thead>
              <tbody>
                <tr><td><span class="pill pill-id">M001</span></td><td>2024-09-10 11:21:41</td><td>2024-09-10 11:23:16</td><td class="text-end"><span class="pill pill-out">방전중</span></td></tr>
                <tr><td><span class="pill pill-id">M001</span></td><td>2024-09-10 11:21:31</td><td>2024-09-10 11:21:36</td><td class="text-end"><span class="pill pill-out">방전중</span></td></tr>
              </tbody>
            </table></div>
            <div class="track"><div class="thumb"></div></div>
          </div>
        </section></div>
      </div>
    </div>
  </div>
  </div>
</main>
</body>
</html>
